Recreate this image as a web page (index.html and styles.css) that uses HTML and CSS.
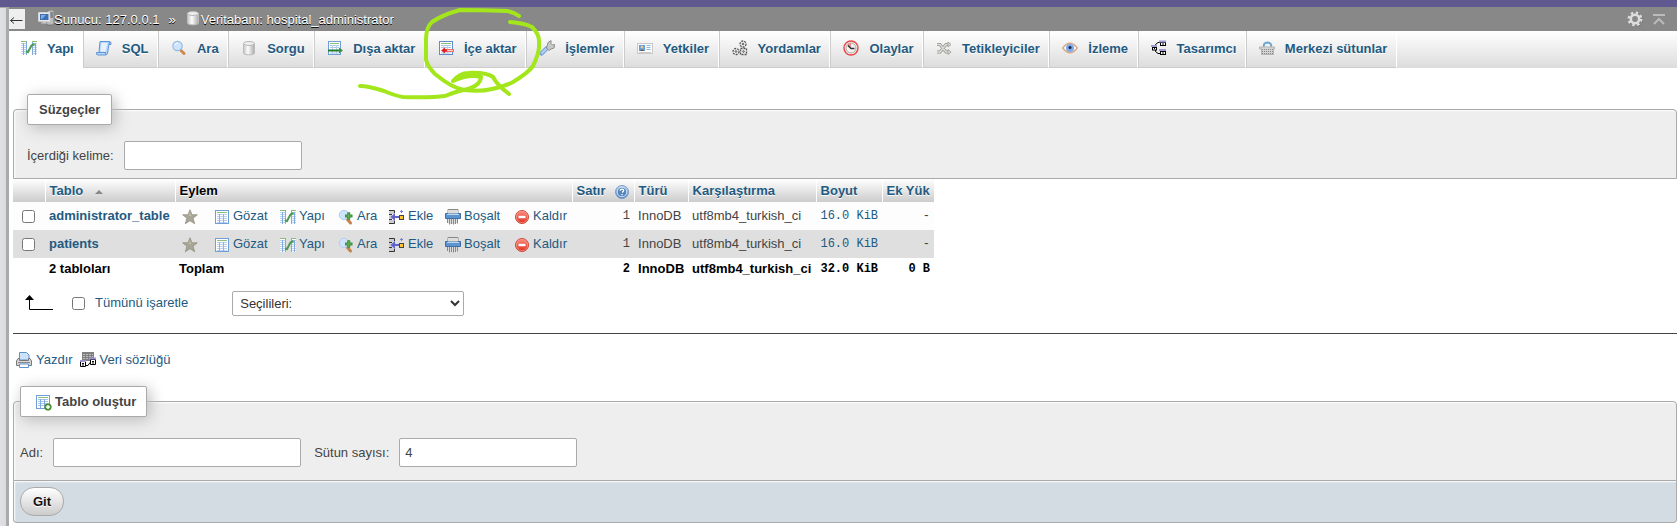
FILE: index.html
```html
<!DOCTYPE html>
<html lang="tr">
<head>
<meta charset="utf-8">
<title>hospital_administrator</title>
<link rel="stylesheet" href="styles.css">
</head>
<body>
<svg class="sprite" aria-hidden="true">
  <defs>
    <linearGradient id="g-cyl" x1="0" x2="1" y1="0" y2="0"><stop offset="0" stop-color="#c4c4c4"/><stop offset=".4" stop-color="#fcfcfc"/><stop offset="1" stop-color="#aaa"/></linearGradient>
    <linearGradient id="g-red" x1="0" x2="0" y1="0" y2="1"><stop offset="0" stop-color="#ff8d80"/><stop offset="1" stop-color="#dc2f20"/></linearGradient>
    <linearGradient id="g-blue" x1="0" x2="0" y1="0" y2="1"><stop offset="0" stop-color="#c4dcf4"/><stop offset="1" stop-color="#3f78bd"/></linearGradient>
  </defs>
  <symbol id="i-table" viewBox="0 0 16 16"><rect x="1.5" y="1.5" width="13" height="13" fill="#fff" stroke="#6e9fd8"/><path d="M3 3.5h10" stroke="#8cc17c"/><path d="M3 5.5h10M3 7.5h10M3 9.5h10M3 11.5h10M3 13.5h10" stroke="#bcd2ee"/><path d="M5.5 5v9M9.5 5v9" stroke="#8fb5e4"/></symbol>
  <symbol id="i-struct" viewBox="0 0 16 16"><path d="M0 1h6v14H0zM11 1h5v14h-5z" fill="#fff"/><path d="M0 1.5h6M11 1.5h5" stroke="#86bd78"/><path d="M0 3.5h6M0 5.5h6M0 7.5h6M0 9.5h6M0 11.5h6M0 13.5h6M11 3.5h5M11 5.5h5M11 7.5h5M11 9.5h5M11 11.5h5M11 13.5h5" stroke="#bcd2ee"/><path d="M2.5 3v12M5.5 2v13M11.5 2v13M14.5 3v12" stroke="#7fabe0"/><path d="M5 11.5L7 12L10.500 5.500L13.500 4" fill="none" stroke="#4a9a54" stroke-width="2"/></symbol>
  <symbol id="i-sql" viewBox="0 0 16 16"><path d="M4 1.500h9.500q2 0 1.500 3h-2L11.500 13q-.5 2-2 2H2q-2 0-1.500-2.500H3z" fill="#b9d5f8" stroke="#5d94d6"/><path d="M3 12.500h6.500v2M13 4.500l.5-2.500" fill="none" stroke="#5d94d6"/><path d="M5.500 3h6L9.500 11.500H4.500z" fill="#e6f1ff"/></symbol>
  <symbol id="i-search" viewBox="0 0 16 16"><path d="M10 10.500l3 3" stroke="#d08a4c" stroke-width="3" stroke-linecap="round"/><circle cx="6.500" cy="6" r="4.700" fill="#cfe4fb" stroke="#96b9e4" stroke-width="1.200"/><path d="M4 5q1-2 3-2" stroke="#fff" fill="none"/></symbol>
  <symbol id="i-searchadd" viewBox="0 0 16 16"><path d="M9.500 10.500l3 3.500" stroke="#c88448" stroke-width="3" stroke-linecap="round"/><circle cx="6" cy="6" r="4.700" fill="#cfe4fb" stroke="#b0cdec"/><path d="M7 7h7.500M10.700 3.300v7.500" stroke="#3c8f3c" stroke-width="3"/><path d="M8 7h5.500M10.700 4.300v5.500" stroke="#62b05c"/></symbol>
  <symbol id="i-db" viewBox="0 0 16 16"><path d="M2.500 3.500v9.500c0 2.500 11 2.500 11 0V3.500z" fill="url(#g-cyl)" stroke="#bbb"/><ellipse cx="8" cy="3.500" rx="5.500" ry="2" fill="#eee" stroke="#b8b8b8"/></symbol>
  <symbol id="i-export" viewBox="0 0 16 16"><rect x="1.500" y="1.500" width="12" height="13" fill="#fff" stroke="#6e9fd8"/><path d="M3 3.500h9" stroke="#8cc17c"/><path d="M3 5.500h9M3 7.500h9M3 13h9" stroke="#a9c6e8"/><path d="M5.500 5v9M9.500 5v9" stroke="#bcd2ee"/><path d="M1 10.500h12" stroke="#207a2c" stroke-width="2"/><path d="M12 7.500l4 3-4 3z" fill="#3c9147"/></symbol>
  <symbol id="i-import" viewBox="0 0 16 16"><rect x="1.500" y="1.500" width="13" height="13" fill="#fff" stroke="#5f8ed0"/><path d="M3 3.500h10" stroke="#8cc17c"/><path d="M3 5.500h10M3 7.500h10M3 13h10" stroke="#a9c6e8"/><path d="M5.500 5v9M9.500 5v9" stroke="#bcd2ee"/><path d="M7 10.500h9" stroke="#f26d6d" stroke-width="3"/><path d="M6 10.500h9" stroke="#ffd0d0"/><path d="M3 10.500l4-3v2h2v2H7v2z" fill="#e02020"/></symbol>
  <symbol id="i-wrench" viewBox="0 0 16 16"><path d="M2.500 13.500l5-5" stroke="#7ba3dd" stroke-width="4.500" stroke-linecap="round"/><path d="M2.500 13.500l5-5" stroke="#b5d0f5" stroke-width="2"/><path d="M8 6.500L9 2.500l3-2v3l1.500 1.500 2.300-.5-.8 3.500-3 1-2 1.500L7.500 8z" fill="#c8c8c8" stroke="#8d8d8d"/></symbol>
  <symbol id="i-card" viewBox="0 0 16 16"><rect x=".5" y="3.500" width="15" height="10" fill="#fafafa" stroke="#c8c8c8"/><rect x="2" y="5" width="6" height="6" fill="#5d9fe0"/><circle cx="5" cy="7" r="1.500" fill="#f2c48d"/><path d="M3 11q2-3 4 0z" fill="#884b20"/><path d="M9.500 5.500h4M9.500 7.500h4M9.500 9.500h4" stroke="#9ab8d8"/><path d="M2 12.500h12" stroke="#ccc"/></symbol>
  <symbol id="i-gears" viewBox="0 0 16 16"><g fill="#eee" stroke="#555"><circle cx="11" cy="4" r="3" stroke-dasharray="2 1" stroke-width="1.300"/><circle cx="4" cy="11.500" r="3" stroke-dasharray="2 1" stroke-width="1.300"/><rect x="8.500" y="8.500" width="6" height="6" stroke-dasharray="2 1" stroke-width="1.300"/><circle cx="11" cy="4" r=".8"/><circle cx="4" cy="11.500" r=".8"/><circle cx="11.500" cy="11.500" r=".8"/></g></symbol>
  <symbol id="i-clock" viewBox="0 0 16 16"><circle cx="8" cy="8" r="7" fill="#f5f3f0" stroke="#ea4545" stroke-width="1.400"/><circle cx="8" cy="8" r="5" fill="none" stroke="#aaa"/><path d="M8 8L4 4.500Q6 2.500 8 3z" fill="#f09090"/><path d="M5 5.500l3 3h3.500" fill="none" stroke="#333" stroke-width="1.500"/></symbol>
  <symbol id="i-trigger" viewBox="0 0 16 16"><path d="M1 4.500h3L10 12h3M1 12h3l6-7.500h3" fill="none" stroke="#92948e" stroke-width="3"/><path d="M1 4.500h3L10 12h3M1 12h3l6-7.500h3" fill="none" stroke="#dfe0dc" stroke-width="1.400"/><path d="M12 2l3 2.500L12 7zM12 9.500l3 2.500-3 2.500z" fill="#e2e2df" stroke="#a2a49e"/></symbol>
  <symbol id="i-eye" viewBox="0 0 16 16"><path d="M.7 8Q8-1.500 15.300 8 8 17.500.7 8z" fill="#faf5ee" stroke="#d8a887" stroke-width="1.300"/><circle cx="8" cy="8" r="4" fill="#7fa9e8"/><circle cx="8" cy="7.500" r="1.500" fill="#14264f"/></symbol>
  <symbol id="i-design" viewBox="0 0 16 16"><path d="M4.500 6.500V4.500L7 2.500h2M4.500 10v1.500L7 13.500h2" fill="none" stroke="#000"/><rect x="1.500" y="7.500" width="4" height="2.500" fill="#fff" stroke="#000"/><rect x="9.500" y="2.500" width="5" height="3" fill="#fff" stroke="#000"/><rect x="9.500" y="11.500" width="5" height="3" fill="#fff" stroke="#000"/><path d="M0 6h6M8 1.500h7M8 10h7" stroke="#a09cd4" stroke-width="2"/><path d="M11 4h2M11 13h2M3 8.500h1" stroke="#000"/></symbol>
  <symbol id="i-basket" viewBox="0 0 16 16"><path d="M5 7q-1-4 3.500-4.500Q13 3 12 7" fill="none" stroke="#6fa5cf" stroke-width="2"/><path d="M.5 7h15v2h-1v5.500h-12V9h-2z" fill="#d4d4d4" stroke="#b4b4b4"/><path d="M3 9.500h11M3 11.500h11M3 13.500h11" stroke="#888" stroke-dasharray="1 1"/></symbol>
  <symbol id="i-server" viewBox="0 0 16 16"><path d="M9 1l2-1h5v14l-2 1H9z" fill="#bcbcbc" stroke="#666" stroke-width=".7"/><path d="M12 3h3M12 5h3M12 7h3" stroke="#555"/><rect x=".7" y="2.700" width="11" height="8.500" fill="#eee" stroke="#ddd"/><rect x="2" y="4" width="8.500" height="6" fill="#3c6eb4"/><path d="M3 5h5l-4 4H3z" fill="#7da9df"/><path d="M5 11h3v1.500h2v1H3v-1h2z" fill="#ccc"/></symbol>
  <symbol id="i-gear" viewBox="0 0 16 16"><circle cx="8.500" cy="8.500" r="6" fill="none" stroke="#666" stroke-width="3" stroke-dasharray="2.400 2.312"/><circle cx="8" cy="8" r="6" fill="none" stroke="#ddd" stroke-width="3" stroke-dasharray="2.400 2.312"/><circle cx="8" cy="8" r="4.200" fill="none" stroke="#ddd" stroke-width="2.600"/></symbol>
  <symbol id="i-totop" viewBox="0 0 16 16"><path d="M2 4h12" stroke="#bbb" stroke-width="2"/><path d="M3 13l5-5 5 5" fill="none" stroke="#bbb" stroke-width="2"/></symbol>
  <symbol id="i-star" viewBox="0 0 16 16"><path d="M8 .8l2 5h5.300l-4.200 3.400 1.600 5.600L8 11.700l-4.700 3.100 1.600-5.600L.7 5.800H6z" fill="#a9a698" stroke="#94917f" stroke-width=".8" stroke-linejoin="round"/><path d="M8 3l1.200 3.700H12l-7 .3 2-.5z" fill="#c1beb2"/></symbol>
  <symbol id="i-insert" viewBox="0 0 16 16"><path d="M0 1h6v4H0zM0 11h6v4H0zM0 6h3v4H0z" fill="#ccc"/><path d="M0 1.500h5.500V4M0 5.500h3M0 10.500h3M0 14.500h5.500V12" fill="none" stroke="#333"/><path d="M1.500 8l4.500-4v3h4v2H6v3z" fill="#6262cc"/><path d="M11 2.500h3M12.500 1v3" stroke="#7a7ad8"/><rect x="10.500" y="6.500" width="4" height="4" fill="#ffc72c" stroke="#444"/></symbol>
  <symbol id="i-shred" viewBox="0 0 16 16"><path d="M3 .5h10v5H3z" fill="#eee" stroke="#888"/><path d="M.5 4.500h15v5H.5z" fill="#5b94cf" stroke="#3f6fa6"/><path d="M2 5.500h12" stroke="#b9d5ef"/><path d="M3 1h10v3.500H3z" fill="#ddd"/><path d="M2.500 10v4M4.500 10v5.500M6.500 10v5M8.500 10v5.500M10.500 10v5M12.500 10v4.500" stroke="#888"/><path d="M3.500 10v4M5.500 10v5M7.500 10v5M9.500 10v5M11.500 10v4" stroke="#ddd"/></symbol>
  <symbol id="i-drop" viewBox="0 0 16 16"><circle cx="8" cy="8" r="6.500" fill="url(#g-red)" stroke="#d0483c"/><circle cx="8" cy="8" r="5.600" fill="none" stroke="#f6a59b" stroke-width=".6"/><rect x="4.500" y="6.800" width="7" height="2.400" fill="#fff"/></symbol>
  <symbol id="i-help" viewBox="0 0 16 16"><circle cx="8" cy="8" r="6.500" fill="url(#g-blue)" stroke="#7d9fc6"/><circle cx="8" cy="8" r="4.800" fill="#5486bd" stroke="#d5e5f5"/><path d="M6.300 6.800q0-1.700 1.700-1.700t1.700 1.500Q9.700 7.500 8 8.500M8 10v1.300" fill="none" stroke="#fff" stroke-width="1.300"/></symbol>
  <symbol id="i-print" viewBox="0 0 16 16"><path d="M3.500 8V.5h7L13 3v5z" fill="#cde2fa" stroke="#5b93d2"/><path d="M2 6.500h1.500v2h9v-2H14l1.500 2.500v4.500H.5V9z" fill="#d8d8d8" stroke="#777"/><path d="M3.500 12h9v3.500h-9z" fill="#fff" stroke="#5b93d2"/><path d="M2 10.500h12" stroke="#888"/></symbol>
  <symbol id="i-dict" viewBox="0 0 16 16"><path d="M2 0h12v9H2z" fill="#808080"/><path d="M3 2.500h10M3 4.500h10M3 6.500h10" stroke="#bbb" stroke-dasharray="2 1"/><path d="M6 13.500h2l2-3" stroke="#000" fill="none"/><path d="M.5 9.500h5v5h-5zM10.500 7.500h5v5h-5z" fill="#fff" stroke="#000"/><path d="M0 9h6M9 6.500h7" stroke="#9a96d4" stroke-width="2"/><path d="M2 11.500h2M2 13h2M12 9.500h2M12 11h2" stroke="#000"/></symbol>
  <symbol id="i-tableadd" viewBox="0 0 16 16"><rect x=".5" y=".5" width="13" height="13" fill="#fff" stroke="#6e9fd8"/><path d="M2 2.500h10" stroke="#8cc17c"/><path d="M2 4.500h10M2 6.500h10M2 8.500h10M2 10.500h10" stroke="#a9c6e8"/><path d="M4.500 4v9M8.500 4v9" stroke="#7fabe0"/><circle cx="12" cy="12" r="3.300" fill="#549b3a" stroke="#3c7a28" stroke-width=".7"/><path d="M10 12h4M12 10v4" stroke="#fff" stroke-width="1.300"/></symbol>
</svg>

<div class="topstrip"></div>
<div class="shell">
  <aside class="nav"></aside>
  <div class="resizer"></div>
  <main class="main">
    <header class="crumbbar">
      <button class="collapse" type="button" aria-label="Paneli gizle"><svg viewBox="0 0 16 20"><path d="M1.500 11.500h12M5 8.500l-3.500 3 3.500 3" fill="none" stroke="#333"/></svg></button>
      <nav class="crumbs">
        <a href="#"><svg class="icon"><use href="#i-server"/></svg>Sunucu: 127.0.0.1</a>
        <span class="sep">»</span>
        <a href="#"><svg class="icon"><use href="#i-db"/></svg>Veritabanı: hospital_administrator</a>
      </nav>
      <div class="tools">
        <a href="#" aria-label="Ayarlar"><svg class="icon"><use href="#i-gear"/></svg></a>
        <a href="#" aria-label="Yukarı"><svg class="icon"><use href="#i-totop"/></svg></a>
      </div>
    </header>

    <nav class="tabs">
      <div class="tablist">
        <a class="tab active" href="#"><svg class="icon"><use href="#i-struct"/></svg>Yapı</a>
        <a class="tab" href="#"><svg class="icon"><use href="#i-sql"/></svg>SQL</a>
        <a class="tab" href="#"><svg class="icon"><use href="#i-search"/></svg>Ara</a>
        <a class="tab" href="#"><svg class="icon"><use href="#i-db"/></svg>Sorgu</a>
        <a class="tab" href="#"><svg class="icon"><use href="#i-export"/></svg>Dışa aktar</a>
        <a class="tab" href="#"><svg class="icon"><use href="#i-import"/></svg>İçe aktar</a>
        <a class="tab" href="#"><svg class="icon"><use href="#i-wrench"/></svg>İşlemler</a>
        <a class="tab" href="#"><svg class="icon"><use href="#i-card"/></svg>Yetkiler</a>
        <a class="tab" href="#"><svg class="icon"><use href="#i-gears"/></svg>Yordamlar</a>
        <a class="tab" href="#"><svg class="icon"><use href="#i-clock"/></svg>Olaylar</a>
        <a class="tab" href="#"><svg class="icon"><use href="#i-trigger"/></svg>Tetikleyiciler</a>
        <a class="tab" href="#"><svg class="icon"><use href="#i-eye"/></svg>İzleme</a>
        <a class="tab" href="#"><svg class="icon"><use href="#i-design"/></svg>Tasarımcı</a>
        <a class="tab" href="#"><svg class="icon"><use href="#i-basket"/></svg>Merkezi sütunlar</a>
      </div>
    </nav>

    <div class="content">
      <fieldset class="box filters">
        <legend>Süzgeçler</legend>
        <div class="fields">
          <label for="word">İçerdiği kelime:</label>
          <input class="text" id="word" type="text">
        </div>
      </fieldset>

      <table class="list">
        <colgroup><col class="c-check"><col class="c-name"><col class="c-star"><col class="c-browse"><col class="c-struct"><col class="c-search"><col class="c-insert"><col class="c-empty"><col class="c-drop"><col class="c-rows"><col class="c-type"><col class="c-coll"><col class="c-size"><col class="c-over"></colgroup>
        <thead>
          <tr>
            <th></th>
            <th><a href="#">Tablo <svg class="sort" viewBox="0 0 8 6"><path d="M4 1l4 4H0z" fill="#888"/></svg></a></th>
            <th colspan="7">Eylem</th>
            <th class="rowshead"><a href="#">Satır <svg class="icon"><use href="#i-help"/></svg></a></th>
            <th><a href="#">Türü</a></th>
            <th><a href="#">Karşılaştırma</a></th>
            <th><a href="#">Boyut</a></th>
            <th><a href="#">Ek Yük</a></th>
          </tr>
        </thead>
        <tbody>
          <tr>
            <td class="check"><input type="checkbox" aria-label="administrator_table"></td>
            <td><a class="name" href="#">administrator_table</a></td>
            <td class="act"><a href="#" aria-label="Sık kullanılan"><svg class="icon"><use href="#i-star"/></svg></a></td>
            <td class="act"><a href="#"><svg class="icon"><use href="#i-table"/></svg>Gözat</a></td>
            <td class="act"><a href="#"><svg class="icon"><use href="#i-struct"/></svg>Yapı</a></td>
            <td class="act"><a href="#"><svg class="icon"><use href="#i-searchadd"/></svg>Ara</a></td>
            <td class="act"><a href="#"><svg class="icon"><use href="#i-insert"/></svg>Ekle</a></td>
            <td class="act"><a href="#"><svg class="icon"><use href="#i-shred"/></svg>Boşalt</a></td>
            <td class="act"><a href="#"><svg class="icon"><use href="#i-drop"/></svg>Kaldır</a></td>
            <td class="num">1</td>
            <td>InnoDB</td>
            <td>utf8mb4_turkish_ci</td>
            <td class="num"><a href="#">16.0 KiB</a></td>
            <td class="num">-</td>
          </tr>
          <tr>
            <td class="check"><input type="checkbox" aria-label="patients"></td>
            <td><a class="name" href="#">patients</a></td>
            <td class="act"><a href="#" aria-label="Sık kullanılan"><svg class="icon"><use href="#i-star"/></svg></a></td>
            <td class="act"><a href="#"><svg class="icon"><use href="#i-table"/></svg>Gözat</a></td>
            <td class="act"><a href="#"><svg class="icon"><use href="#i-struct"/></svg>Yapı</a></td>
            <td class="act"><a href="#"><svg class="icon"><use href="#i-searchadd"/></svg>Ara</a></td>
            <td class="act"><a href="#"><svg class="icon"><use href="#i-insert"/></svg>Ekle</a></td>
            <td class="act"><a href="#"><svg class="icon"><use href="#i-shred"/></svg>Boşalt</a></td>
            <td class="act"><a href="#"><svg class="icon"><use href="#i-drop"/></svg>Kaldır</a></td>
            <td class="num">1</td>
            <td>InnoDB</td>
            <td>utf8mb4_turkish_ci</td>
            <td class="num"><a href="#">16.0 KiB</a></td>
            <td class="num">-</td>
          </tr>
        </tbody>
        <tfoot>
          <tr>
            <td></td>
            <td>2 tabloları</td>
            <td colspan="7">Toplam</td>
            <td class="num">2</td>
            <td>InnoDB</td>
            <td>utf8mb4_turkish_ci</td>
            <td class="num">32.0 KiB</td>
            <td class="num">0 B</td>
          </tr>
        </tfoot>
      </table>

      <div class="bulk">
        <svg class="arrow" viewBox="0 0 30 16"><path d="M5.500 3v11.500H29" fill="none" stroke="#000"/><path d="M5.500 0l4.500 5H1z"/></svg>
        <input type="checkbox" id="all">
        <label for="all">Tümünü işaretle</label>
        <select aria-label="Seçilileri"><option>Seçilileri:</option></select>
      </div>

      <hr>

      <div class="links">
        <a href="#"><svg class="icon"><use href="#i-print"/></svg>Yazdır</a>
        <a href="#"><svg class="icon"><use href="#i-dict"/></svg>Veri sözlüğü</a>
      </div>

      <form>
        <fieldset class="box create">
          <legend><svg class="icon"><use href="#i-tableadd"/></svg>Tablo oluştur</legend>
          <div class="fields">
            <label for="tname">Adı:</label>
            <input class="text wide" id="tname" type="text">
            <label class="second" for="cols">Sütun sayısı:</label>
            <input class="text" id="cols" type="text" value="4">
          </div>
        </fieldset>
        <div class="footer"><button class="go" type="submit">Git</button></div>
      </form>
    </div>
  </main>
</div>

<svg class="scribble" viewBox="0 0 200 100" aria-hidden="true">
  <path d="M169 11Q164 7 157 6Q132 5 110 5Q92 10 82 17Q76 22 76 35V55Q78 62 85 69Q102 83 114 85Q130 87 142 84Q158 80 163 77Q178 68 183 61Q190 47 189 38Q190 30 182 22Q174 18 160 17"/>
  <path d="M10 81Q18 81 34 86Q46 91 53 92Q80 93 95 91Q105 87 113 85Q130 82 131 72Q118 69 103 76Q110 68 118 68Q136 67 143 72Q147 80 159 89"/>
</svg>
</body>
</html>
```
FILE: styles.css
```css
* { box-sizing: border-box; }
body {
  margin: 0;
  min-height: 100vh;
  display: flex;
  flex-direction: column;
  font: 13px/16px "Liberation Sans", Arial, sans-serif;
  color: #444;
  background: #fff;
}
a { color: #235a81; text-decoration: none; }
input, select, button { font: inherit; color: inherit; }
.sprite { position: absolute; width: 0; height: 0; }
.icon { width: 16px; height: 16px; flex: none; }

.topstrip { height: 7px; background: #605990; }
.shell { flex: 1; display: flex; }
.nav { width: 6px; background: linear-gradient(to right, #e0e1e4, #d9dbdf); border-top: 1px solid #aaa; }
.resizer { width: 3px; background: #aaa; }
.main { flex: 1; min-width: 0; }

.crumbbar {
  display: flex;
  align-items: center;
  height: 24px;
  padding-right: 10px;
  background: #888;
}
.collapse {
  width: 16px;
  height: 20px;
  padding: 0;
  border: 0;
  background: #eee;
}
.collapse svg { display: block; width: 16px; height: 20px; }
.crumbs { display: flex; gap: 9px; margin-left: 13px; padding-top: 2px; color: #fff; text-shadow: 0 1px 0 #000; }
.crumbs a { display: flex; color: #fff; }
.crumbs .icon { margin-top: -2px; }
.tools { display: flex; gap: 8px; margin-left: auto; }
.tools a { display: flex; }

.tabs { height: 37px; background: linear-gradient(#fff, #dcdcdc); }
.tablist { display: flex; height: 100%; max-width: 1388px; }
.tab {
  flex: 1 0 auto;
  display: flex;
  align-items: center;
  gap: 10px;
  padding: 0 8px 0 12px;
  border: 1px solid #ccc;
  border-top: 0;
  border-right-color: #fff;
  font-weight: bold;
  text-shadow: 0 1px 0 #fff;
}
.tab .icon { margin-bottom: 2px; }
.tab.active { flex-grow: 0; padding-left: 11px; background: #fff; border-color: #fff; }

.content { padding: 26px 0 0 4px; }
.box {
  margin: 0;
  min-width: 0;
  border: 1px solid #aaa;
  border-radius: 4px 4px 0 0;
  background: #eee;
  box-shadow: inset 1px 1px 2px #fff;
}
.box legend {
  display: flex;
  align-items: center;
  height: 31px;
  padding: 0 11px;
  border: 1px solid #aaa;
  border-radius: 2px;
  background: #fff;
  box-shadow: 3px 3px 15px #bbb;
  font-weight: bold;
}
.filters { padding: 0 13px 8px; }
.filters .fields { padding-top: 16px; }
.fields { display: flex; align-items: center; gap: 10px; }
.text {
  width: 178px;
  height: 29px;
  padding: 0 5px;
  border: 1px solid #aaa;
  border-radius: 2px;
  background: #fff;
}
.text.wide { width: 248px; }

.list { width: 921px; table-layout: fixed; border-collapse: collapse; white-space: nowrap; }
.c-check { width: 32px; }
.c-name { width: 130px; }
.c-star { width: 32px; }
.c-browse { width: 66px; }
.c-struct { width: 58px; }
.c-search { width: 51px; }
.c-insert { width: 56px; }
.c-empty { width: 69px; }
.c-drop { width: 65px; }
.c-rows { width: 62px; }
.c-type { width: 54px; }
.c-coll { width: 128px; }
.c-size { width: 66px; }
.c-over { width: 52px; }
.list th {
  height: 23px;
  padding: 0 4px;
  text-align: left;
  color: #000;
  background: linear-gradient(#fff, #ccc);
  border-right: 1px solid #fff;
  text-shadow: 0 1px 0 #fff;
}
.list .rowshead a { display: flex; align-items: center; justify-content: space-between; }
.rowshead .icon { margin-top: 2px; }
.sort { width: 8px; height: 6px; margin-left: 8px; }
.list td { padding: 0 4px; }
.list tbody td { height: 28px; background: #fdfdfd; }
.list tbody tr:nth-child(even) td { background: #dfdfdf; }
.list tfoot td { height: 21px; color: #000; font-weight: bold; }
.list .check { padding-left: 9px; }
.check input { display: block; width: 13px; height: 13px; margin: 0; }
.name { font-weight: bold; }
.list .act { padding: 0 0 0 7px; }
.act a { display: flex; align-items: center; gap: 3px; }
.act .icon { margin-top: 2px; }
.list .num { text-align: right; font-family: "Liberation Mono", monospace; font-size: 12px; }

.bulk { display: flex; align-items: center; height: 26px; margin-top: 11px; padding-left: 11px; }
.arrow { width: 30px; height: 16px; }
.bulk input { width: 13px; height: 13px; margin: 0 10px 0 18px; }
.bulk label { color: #235a81; }
.bulk select {
  width: 232px;
  height: 25px;
  margin-left: 44px;
  padding: 0 3px;
  border: 1px solid #aaa;
  border-radius: 2px;
  background: #fff;
  color: #333;
}
hr { margin: 17px 0 0; border: 0; border-top: 1px solid #444; }
.links { display: flex; gap: 7px; padding: 18px 0 0 3px; }
.links a { display: flex; gap: 4px; }

form { margin-top: 18px; }
.create { padding: 0 6px 13px; }
.create legend { gap: 3px; padding: 0 10px 0 15px; }
.create legend .icon { margin-top: 2px; }
.create .fields { padding-top: 21px; }
.second { margin-left: 3px; }
.footer {
  padding: 6px;
  border: 1px solid #aaa;
  border-top: 0;
  border-radius: 0 0 4px 4px;
  background: #d3dce3;
  box-shadow: inset 1px 1px 2px #fff;
}
.go {
  display: block;
  height: 29px;
  padding: 0 12px;
  border: 1px solid #aaa;
  border-radius: 14px;
  background: linear-gradient(#fff, #ccc);
  color: #111;
  font-weight: bold;
  text-shadow: 0 1px 0 #fff;
}

.scribble {
  position: absolute;
  left: 350px;
  top: 5px;
  width: 200px;
  height: 100px;
  fill: none;
  stroke: #a2e61b;
  stroke-width: 4px;
  stroke-linecap: round;
  stroke-linejoin: round;
  pointer-events: none;
}
```
